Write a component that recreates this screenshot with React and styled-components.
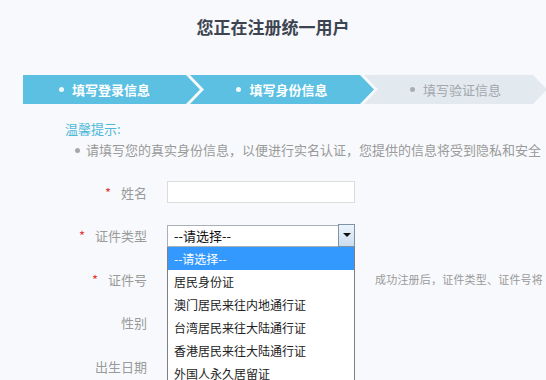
import React from 'react'
import styled, {createGlobalStyle, css} from 'styled-components'

const GlobalStyle = createGlobalStyle`
body {
  margin: 0;
  background: #f7f9fc;
  font-family: "Noto Sans CJK SC", "Noto Sans", sans-serif;
  overflow: hidden;
}
`

const Page = styled.div`
width: 546px;
height: 380px;
overflow: hidden;
display: flex;
flex-direction: column;
`

const Title = styled.h1`
margin: 0;
padding-top: 15px;
line-height: 24px;
font-size: 17px;
font-weight: bold;
color: #3d4450;
text-align: center;
`

const Steps = styled.div`
display: flex;
margin-top: 36px;
padding-left: 23px;
height: 29px;
`

const Step = styled.div`
flex: none;
width: ${props => props.w}px;
margin-left: ${props => props.first ? 0 : -10}px;
box-sizing: border-box;
padding: 0 14px;
padding-left: ${props => props.first ? 0 : 14}px;
display: flex;
align-items: center;
justify-content: center;
font-size: 13px;
background: #e2e9ef;
color: #a3a7ab;
clip-path: polygon(0 0, calc(100% - 14px) 0, 100% 50%, calc(100% - 14px) 100%, 0 100%, 14px 50%);
${props => props.first && css`
clip-path: polygon(0 0, calc(100% - 14px) 0, 100% 50%, calc(100% - 14px) 100%, 0 100%);
`}
${props => props.active && css`
background: #5bc0e2;
color: #fff;
font-weight: bold;
`}
`

const Dot = styled.span`
width: 5px;
height: 5px;
border-radius: 50%;
background: currentColor;
margin-right: 8px;
opacity: 0.9;
`

const TipTitle = styled.div`
margin-top: 16px;
padding-left: 65px;
line-height: 18px;
font-size: 13px;
color: #4db8d9;
`

const TipLine = styled.div`
margin-top: 3px;
padding-left: 75px;
line-height: 18px;
font-size: 13px;
color: #9a9a9a;
white-space: nowrap;
display: flex;
align-items: center;
`

const GrayDot = styled.span`
flex: none;
width: 5px;
height: 5px;
border-radius: 50%;
background: #a8a8a8;
margin-right: 6px;
`

const Form = styled.div`
margin-top: 22px;
display: grid;
grid-template-columns: 147px 188px auto;
grid-auto-rows: 22px;
column-gap: 20px;
row-gap: 21.5px;
`

const Label = styled.div`
display: flex;
align-items: center;
justify-content: flex-end;
font-size: 13px;
color: #9a9a9a;
`

const Star = styled.span`
color: #e23a3a;
margin-right: 10px;
font-size: 13px;
`

const Input = styled.div`
box-sizing: border-box;
border: 1px solid #dcdcdc;
background: #fff;
`

const SelectWrap = styled.div`
position: relative;
`

const SelectBox = styled.div`
box-sizing: border-box;
height: 22px;
border: 1px solid #a9b0b8;
background: #fff;
padding-left: 6px;
display: flex;
align-items: center;
font-size: 13px;
color: #111;
`

const ArrowButton = styled.div`
position: absolute;
right: 0;
top: -1px;
width: 17px;
height: 23px;
box-sizing: border-box;
border: 1px solid #7d93a8;
background: linear-gradient(#edf4fb, #cbdcee);
display: flex;
align-items: center;
justify-content: center;
&::after {
  content: "";
  border-left: 4px solid transparent;
  border-right: 4px solid transparent;
  border-top: 4px solid #111;
}
`

const Dropdown = styled.div`
position: absolute;
top: 22px;
left: 0;
width: 188px;
box-sizing: border-box;
border: 1px solid #7f7f7f;
border-top: none;
background: #fff;
z-index: 2;
`

const Option = styled.div`
height: 23px;
line-height: 23px;
padding-left: 6px;
font-size: 12px;
color: #222;
white-space: nowrap;
${props => props.selected && css`
background: #3399ff;
color: #fff;
`}
`

const Hint = styled.div`
display: flex;
align-items: center;
font-size: 11px;
letter-spacing: 0.2px;
color: #9a9a9a;
white-space: nowrap;
`

const options = [
  '--请选择--',
  '居民身份证',
  '澳门居民来往内地通行证',
  '台湾居民来往大陆通行证',
  '香港居民来往大陆通行证',
  '外国人永久居留证',
]

const steps = [
  {text: '填写登录信息', w: 177, active: true},
  {text: '填写身份信息', w: 184, active: true},
  {text: '填写验证信息', w: 183, active: false},
]

export default function App() {
  return (
    <Page>
      <GlobalStyle />
      <Title>您正在注册统一用户</Title>
      <Steps>
        {steps.map((s, i) =>
          <Step key={s.text} w={s.w} first={i === 0} active={s.active}>
            <Dot />{s.text}
          </Step>
        )}
      </Steps>
      <TipTitle>温馨提示:</TipTitle>
      <TipLine>
        <GrayDot />请填写您的真实身份信息，以便进行实名认证，您提供的信息将受到隐私和安全
      </TipLine>
      <Form>
        <Label><Star>*</Star>姓名</Label>
        <Input />
        <div />

        <Label><Star>*</Star>证件类型</Label>
        <SelectWrap>
          <SelectBox>--请选择--</SelectBox>
          <ArrowButton />
          <Dropdown>
            {options.map((o, i) =>
              <Option key={o} selected={i === 0}>{o}</Option>
            )}
          </Dropdown>
        </SelectWrap>
        <div />

        <Label><Star>*</Star>证件号</Label>
        <Input />
        <Hint>成功注册后，证件类型、证件号将</Hint>

        <Label>性别</Label>
        <div />
        <div />

        <Label>出生日期</Label>
        <Input />
        <div />
      </Form>
    </Page>
  )
}
